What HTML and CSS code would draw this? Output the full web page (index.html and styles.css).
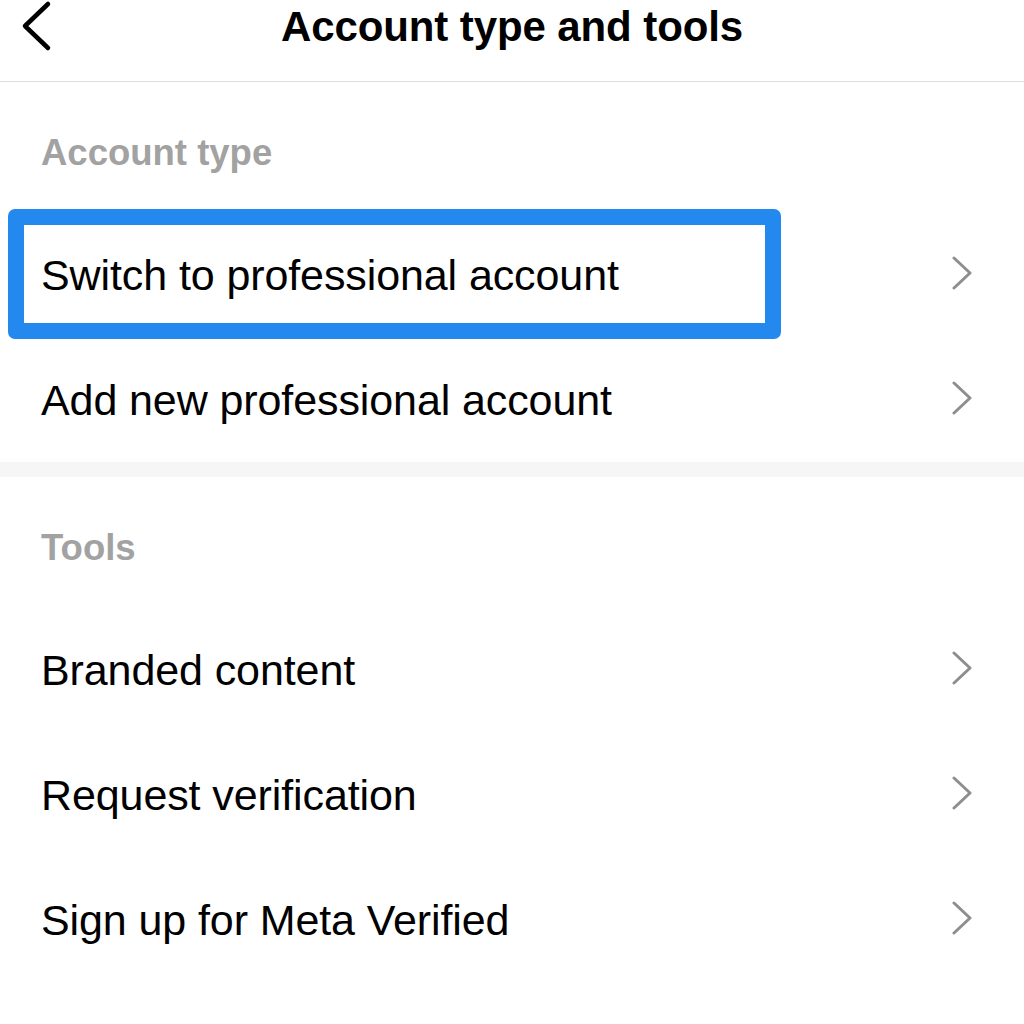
FILE: index.html
```html
<!DOCTYPE html>
<html lang="en">
<head>
<meta charset="utf-8">
<title>Account type and tools</title>
<link rel="stylesheet" href="styles.css">
</head>
<body>
<div class="screen">
  <header class="topbar">
    <button class="back" aria-label="Back">
      <svg width="60" height="52" viewBox="0 0 60 52"><path d="M48 4 L25 26 L48 48" fill="none" stroke="#000" stroke-width="4.5" stroke-linecap="round" stroke-linejoin="round"/></svg>
    </button>
    <h1 class="title">Account type and tools</h1>
  </header>

  <section class="group">
    <div class="label">Account type</div>
    <div class="row highlighted">
      <span class="row-text">Switch to professional account</span>
      <svg class="chev" width="24" height="36" viewBox="0 0 24 36"><path d="M4 2 L20 17 L4 32" fill="none" stroke="#8e8e8e" stroke-width="3" stroke-linecap="round" stroke-linejoin="round"/></svg>
      <div class="highlight-box"></div>
    </div>
    <div class="row">
      <span class="row-text">Add new professional account</span>
      <svg class="chev" width="24" height="36" viewBox="0 0 24 36"><path d="M4 2 L20 17 L4 32" fill="none" stroke="#8e8e8e" stroke-width="3" stroke-linecap="round" stroke-linejoin="round"/></svg>
    </div>
  </section>

  <div class="band"></div>

  <section class="group">
    <div class="label">Tools</div>
    <div class="row">
      <span class="row-text">Branded content</span>
      <svg class="chev" width="24" height="36" viewBox="0 0 24 36"><path d="M4 2 L20 17 L4 32" fill="none" stroke="#8e8e8e" stroke-width="3" stroke-linecap="round" stroke-linejoin="round"/></svg>
    </div>
    <div class="row">
      <span class="row-text">Request verification</span>
      <svg class="chev" width="24" height="36" viewBox="0 0 24 36"><path d="M4 2 L20 17 L4 32" fill="none" stroke="#8e8e8e" stroke-width="3" stroke-linecap="round" stroke-linejoin="round"/></svg>
    </div>
    <div class="row">
      <span class="row-text">Sign up for Meta Verified</span>
      <svg class="chev" width="24" height="36" viewBox="0 0 24 36"><path d="M4 2 L20 17 L4 32" fill="none" stroke="#8e8e8e" stroke-width="3" stroke-linecap="round" stroke-linejoin="round"/></svg>
    </div>
  </section>
</div>
</body>
</html>
```

FILE: styles.css
```css
* { box-sizing: border-box; }
html, body {
  margin: 0;
  padding: 0;
  background: #fff;
}
body {
  font-family: "Liberation Sans", Arial, sans-serif;
  color: #000;
}
.screen {
  width: 1024px;
  height: 1024px;
  overflow: hidden;
  display: flex;
  flex-direction: column;
}
.topbar {
  height: 82px;
  border-bottom: 1px solid #dedede;
  display: grid;
  grid-template-columns: 1fr;
  align-items: start;
  position: relative;
}
.back {
  position: absolute;
  left: 0;
  top: 0;
  border: 0;
  background: none;
  padding: 0;
  margin: 0;
  width: 60px;
  height: 52px;
  display: block;
}
.back svg { display: block; }
.title {
  margin: 0;
  text-align: center;
  font-size: 42px;
  font-weight: 700;
  line-height: 52px;
  padding-top: 1px;
  letter-spacing: -0.1px;
}
.group {
  display: flex;
  flex-direction: column;
}
.label {
  padding: 51px 41px 39px;
  line-height: 40px;
  font-size: 36.5px;
  font-weight: 700;
  color: #a2a2a2;
}
.row {
  position: relative;
  height: 125px;
  display: flex;
  align-items: center;
  justify-content: space-between;
  padding: 0 50px 0 41px;
}
.row-text {
  font-size: 43px;
  line-height: 50px;
  letter-spacing: -0.1px;
}
.chev { display: block; margin-top: -1px; }
.highlight-box {
  position: absolute;
  left: 8px;
  top: -3px;
  width: 773px;
  height: 130px;
  border: 16px solid #2389ee;
  border-radius: 7px;
  pointer-events: none;
}
.band {
  height: 15px;
  background: #f6f6f6;
}
```
